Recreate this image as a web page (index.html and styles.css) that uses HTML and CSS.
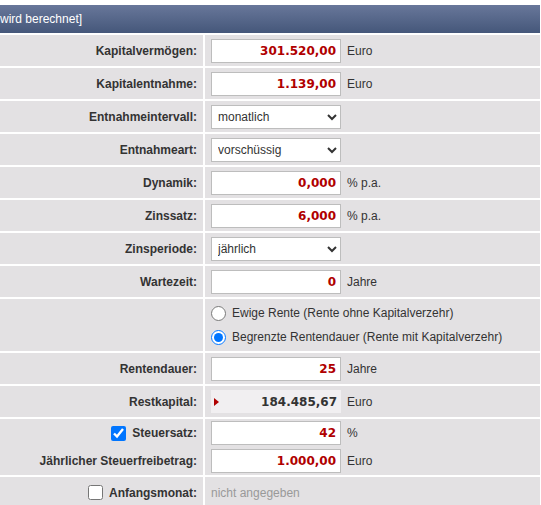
FILE: index.html
```html
<!DOCTYPE html>
<html lang="de">
<head>
<meta charset="utf-8">
<title>Entnahmeplan</title>
<link rel="stylesheet" href="styles.css">
</head>
<body>
<div class="calc">
  <div class="head"><span class="head-text">wird berechnet]</span></div>

  <div class="row">
    <div class="label">Kapitalvermögen:</div>
    <div class="value"><input class="num" type="text" value="301.520,00"><span class="unit">Euro</span></div>
  </div>
  <div class="row">
    <div class="label">Kapitalentnahme:</div>
    <div class="value"><input class="num" type="text" value="1.139,00"><span class="unit">Euro</span></div>
  </div>
  <div class="row">
    <div class="label">Entnahmeintervall:</div>
    <div class="value"><select class="sel"><option>monatlich</option></select></div>
  </div>
  <div class="row">
    <div class="label">Entnahmeart:</div>
    <div class="value"><select class="sel"><option>vorschüssig</option></select></div>
  </div>
  <div class="row">
    <div class="label">Dynamik:</div>
    <div class="value"><input class="num" type="text" value="0,000"><span class="unit">% p.a.</span></div>
  </div>
  <div class="row">
    <div class="label">Zinssatz:</div>
    <div class="value"><input class="num" type="text" value="6,000"><span class="unit">% p.a.</span></div>
  </div>
  <div class="row">
    <div class="label">Zinsperiode:</div>
    <div class="value"><select class="sel"><option>jährlich</option></select></div>
  </div>
  <div class="row">
    <div class="label">Wartezeit:</div>
    <div class="value"><input class="num" type="text" value="0"><span class="unit">Jahre</span></div>
  </div>
  <div class="row row-radio">
    <div class="label"></div>
    <div class="value value-stack">
      <label class="radio-line"><input class="radio" type="radio" name="art">Ewige Rente (Rente ohne Kapitalverzehr)</label>
      <label class="radio-line"><input class="radio" type="radio" name="art" checked>Begrenzte Rentendauer (Rente mit Kapitalverzehr)</label>
    </div>
  </div>
  <div class="row">
    <div class="label">Rentendauer:</div>
    <div class="value"><input class="num" type="text" value="25"><span class="unit">Jahre</span></div>
  </div>
  <div class="row">
    <div class="label">Restkapital:</div>
    <div class="value"><div class="result"><span class="tri"></span><span class="result-num">184.485,67</span></div><span class="unit">Euro</span></div>
  </div>
  <div class="row row-sub">
    <div class="label"><input class="check" type="checkbox" checked>Steuersatz:</div>
    <div class="value"><input class="num" type="text" value="42"><span class="unit">%</span></div>
  </div>
  <div class="row row-sub row-tight">
    <div class="label">Jährlicher Steuerfreibetrag:</div>
    <div class="value"><input class="num" type="text" value="1.000,00"><span class="unit">Euro</span></div>
  </div>
  <div class="row">
    <div class="label"><input class="check" type="checkbox">Anfangsmonat:</div>
    <div class="value"><span class="muted">nicht angegeben</span></div>
  </div>
</div>
</body>
</html>
```
FILE: styles.css
```css
html, body {
  margin: 0;
  padding: 0;
  background: #ffffff;
}
body {
  padding-top: 5px;
  font-family: "Liberation Sans", Arial, sans-serif;
  font-size: 12px;
  color: #333333;
}
.calc {
  width: 540px;
  background: #ffffff;
}
.head {
  height: 28px;
  background: linear-gradient(#68779a, #45577a);
  display: flex;
  align-items: center;
  color: #ffffff;
  font-size: 12px;
  overflow: hidden;
}
.head-text {
  padding-left: 0;
}
.row {
  display: grid;
  grid-template-columns: 203px 1fr;
  column-gap: 2px;
  margin-top: 2px;
  height: 31px;
}
.label, .value {
  background: #e3e1e3;
  display: flex;
  align-items: center;
}
.label {
  justify-content: flex-end;
  padding-right: 6px;
  font-weight: bold;
  font-size: 12px;
  color: #333333;
}
.value {
  padding-left: 6px;
}
.num {
  box-sizing: border-box;
  width: 130px;
  height: 24px;
  margin: 0;
  padding: 0 4px 0 4px;
  border: 1px solid #bdbdbd;
  background: #ffffff;
  text-align: right;
  font-family: "DejaVu Sans", Verdana, sans-serif;
  font-weight: bold;
  font-size: 12px;
  color: #b00000;
  outline: none;
}
.unit {
  margin-left: 6px;
  color: #333333;
}
.sel {
  box-sizing: border-box;
  width: 130px;
  height: 24px;
  margin: 0;
  border: 1px solid #bdbdbd;
  border-radius: 0;
  background: #ffffff;
  font-family: "Liberation Sans", Arial, sans-serif;
  font-size: 12px;
  color: #333333;
  padding-left: 2px;
}
.row-radio {
  height: 52px;
}
.value-stack {
  flex-direction: column;
  align-items: flex-start;
  justify-content: flex-start;
  padding-top: 2px;
}
.radio-line {
  display: flex;
  align-items: center;
  height: 24px;
  color: #333333;
}
.radio {
  width: 15px;
  height: 15px;
  margin: 0 6px 0 0;
}
.result {
  box-sizing: border-box;
  width: 130px;
  height: 23px;
  background: #f1eff1;
  display: flex;
  align-items: center;
  justify-content: space-between;
  padding: 0 4px 0 3px;
}
.tri {
  width: 0;
  height: 0;
  border-top: 4px solid transparent;
  border-bottom: 4px solid transparent;
  border-left: 5px solid #b00000;
}
.result-num {
  font-family: "DejaVu Sans", Verdana, sans-serif;
  font-weight: bold;
  font-size: 12px;
  color: #333333;
}
.row-sub {
  height: 28px;
}
.row-tight {
  margin-top: 0;
}
.check {
  width: 15px;
  height: 15px;
  margin: 0 6px 0 0;
}
.muted {
  color: #999999;
}
```
